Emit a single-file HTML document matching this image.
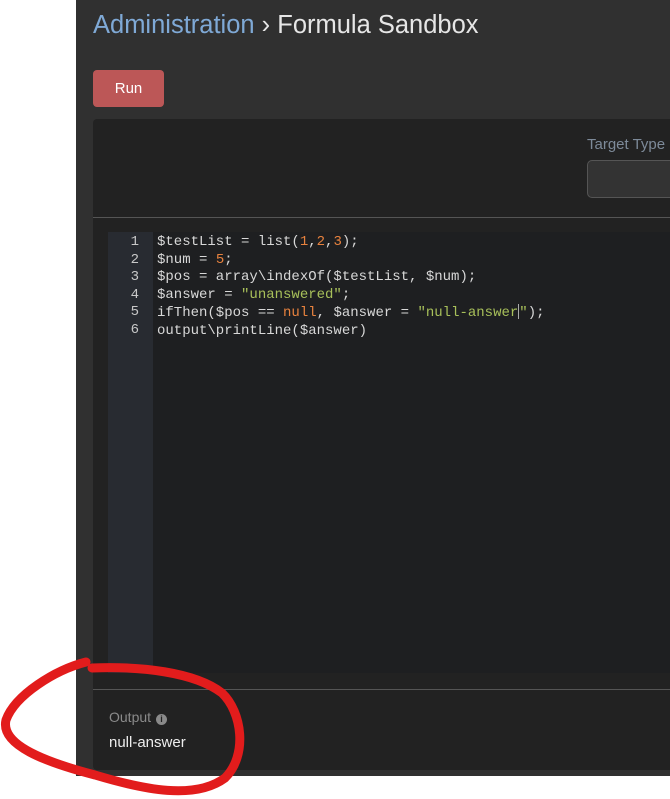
<!DOCTYPE html>
<html><head><meta charset="utf-8"><style>
*{margin:0;padding:0;box-sizing:border-box}
body{width:670px;height:799px;background:#fff;position:relative;overflow:hidden;font-family:"Liberation Sans",sans-serif}
.panel{position:absolute;left:76px;top:0;width:594px;height:776px;background:#303030}
h1{position:absolute;left:93px;top:11px;font-size:25.5px;font-weight:normal;color:#e6e6e6;white-space:nowrap}
h1 span{color:#7fa9d6}
.run{position:absolute;left:93px;top:70px;width:71px;height:37px;background:#bc5757;border-radius:4px;color:#fff;font-size:15px;text-align:center;line-height:37px}
.card{position:absolute;left:93px;top:119px;width:577px;height:651px;background:#222;border-radius:4px 0 0 4px}
.tt{position:absolute;left:587px;top:136px;color:#7d8a99;font-size:15px;white-space:nowrap}
.inp{position:absolute;left:587px;top:160px;width:90px;height:38px;border:1px solid #555;border-radius:5px;background:#333}
.hr{position:absolute;left:93px;width:577px;height:1px;background:#555}
.ed{position:absolute;left:108px;top:232px;width:562px;height:441px;background:#1e1f21}
.gut{position:absolute;left:108px;top:232px;width:45px;height:441px;background:#282b31}
.ln{position:absolute;left:108px;top:234px;width:31px;text-align:right;font:14px/17.6px "Liberation Mono",monospace;color:#c8c8c8}
.code{position:absolute;left:157px;top:234px;font:14px/17.6px "Liberation Mono",monospace;color:#d8d8d8;white-space:pre}
.n{color:#e8823e}.s{color:#a8c05a}
.cur{display:inline-block;width:1px;height:15px;background:#aaa;vertical-align:-3px}
.ol{position:absolute;left:109px;top:709px;color:#8a8a8a;font-size:14px}
.oi{display:inline-block;width:11px;height:11px;border-radius:50%;background:#8a8a8a;color:#222;font-size:9px;line-height:11px;text-align:center;font-weight:bold;vertical-align:0px;margin-left:5px}
.ov{position:absolute;left:109px;top:734px;color:#eee;font-size:15px}
</style></head><body>
<div class="panel"></div>
<h1><span>Administration</span> › Formula Sandbox</h1>
<div class="run">Run</div>
<div class="card"></div>
<div class="tt">Target Type</div>
<div class="inp"></div>
<div class="hr" style="top:217px"></div>
<div class="ed"></div><div class="gut"></div>
<div class="ln">1<br>2<br>3<br>4<br>5<br>6</div>
<div class="code">$testList = list(<span class="n">1</span>,<span class="n">2</span>,<span class="n">3</span>);
$num = <span class="n">5</span>;
$pos = array\indexOf($testList, $num);
$answer = <span class="s">"unanswered"</span>;
ifThen($pos == <span class="n">null</span>, $answer = <span class="s">"null-answer</span><span class="cur"></span><span class="s">"</span>);
output\printLine($answer)</div>
<div class="hr" style="top:689px"></div>
<div class="ol">Output<span class="oi">i</span></div>
<div class="ov">null-answer</div>
<svg style="position:absolute;left:0;top:0" width="670" height="799"><path d="M86 662 C55 670 15 695 6 720 C0 745 45 762 95 775 C145 790 195 800 225 778 C248 755 242 712 222 693 C195 672 140 666 92 668" fill="none" stroke="#e21c1c" stroke-width="9" stroke-linecap="round"/></svg>
</body></html>
